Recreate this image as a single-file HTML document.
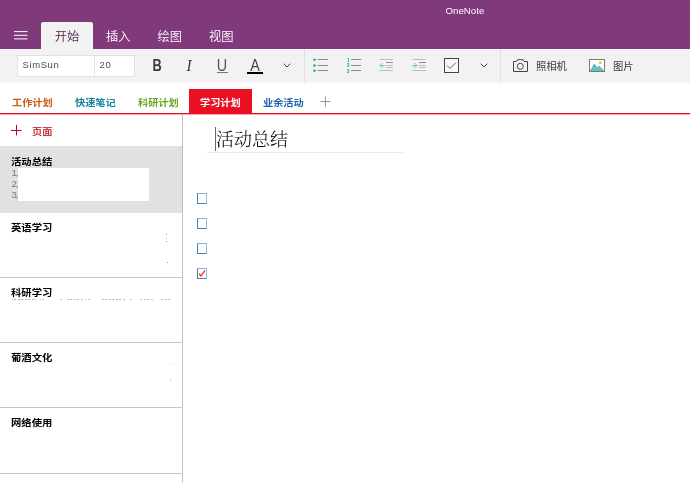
<!DOCTYPE html>
<html lang="zh-CN">
<head>
<meta charset="utf-8">
<title>OneNote</title>
<style>
*{box-sizing:border-box;margin:0;padding:0}
html,body{width:690px;height:482px;overflow:hidden;background:#fff}
body{position:relative;will-change:transform;font-family:"Liberation Sans","Noto Sans CJK SC",sans-serif;color:#222}
.abs{position:absolute;white-space:nowrap}
#titlebar{left:0;top:0;width:690px;height:49px;background:#80397b}
#appname{left:445.500px;top:4.700px;font-size:9.700px;line-height:11px;color:#fff}
.tab{top:29px;font-size:12.300px;line-height:16px;color:#fff;font-weight:350}
#tab-home{left:41px;top:22px;width:52px;height:27px;background:#f2f2f2;border-radius:2px 2px 0 0}
#ribbon{left:0;top:49px;width:690px;height:33px;background:#f2f2f2;border-bottom:1px solid #f7f7f7;height:34px}
.box{top:55px;height:22px;background:#fff;border:1px solid #e1e1e1;font-size:9.500px;letter-spacing:.6px;line-height:17.400px;color:#4a4a4a;padding-left:4.500px}
.sep{top:50px;width:1px;height:32px;background:#e0e0e0}
.rt{font-size:10.300px;line-height:14px;color:#3a3a3a;top:59.500px;font-weight:400}
.gl{top:57px;width:20px;text-align:center;font-size:16px;line-height:17px}
.sec{top:97px;font-size:10.200px;line-height:12px;font-weight:bold;transform:scaleY(.94);transform-origin:0 10px}
#redline{left:0;top:113px;width:690px;height:1px;background:#e81123}
#sideborder{left:182px;top:114px;width:1px;height:368px;background:#bdbdbd}
.item{left:0;width:182px;height:65px}
.item b{position:absolute;left:11px;top:8px;font-size:10.200px;line-height:14px;color:#000;transform:scale(1.015,.9);transform-origin:0 12px}
.hr{left:0;width:182px;height:1px;background:#c6c6c6}
.chk{left:197px;width:10px;height:11px;border:1px solid #4a7ebb;border-top-color:#8fb0d9;border-right-color:#9dbbe0;background:#fff}
.dot{width:1px;height:1px;background:#999}
</style>
</head>
<body>
<div id="titlebar" class="abs"></div>
<div id="appname" class="abs">OneNote</div>
<svg class="abs" style="left:14px;top:31px" width="14" height="10" viewBox="0 0 14 10"><path d="M0 .6H13.500M0 4.300H13.500M0 7.900H13.500" stroke="#fff" stroke-width="1" fill="none"/></svg>
<div id="tab-home" class="abs"></div>
<div class="abs tab" style="left:54.700px;color:#55264f">开始</div>
<div class="abs tab" style="left:106px">插入</div>
<div class="abs tab" style="left:157.500px">绘图</div>
<div class="abs tab" style="left:209px">视图</div>

<div id="ribbon" class="abs"></div>
<div class="abs box" style="left:17px;width:78px">SimSun</div>
<div class="abs box" style="left:94px;width:41px">20</div>
<div class="abs gl" style="left:146.500px;font-weight:bold;color:#3a3a3a;transform:scaleX(.8)">B</div>
<div class="abs gl" style="left:179px;font-size:17px;font-style:italic;color:#3a3a3a;font-family:'Liberation Serif',serif;transform:scaleX(.9)">I</div>
<div class="abs gl" style="left:212.300px;color:#555;transform:scaleX(.9)">U</div>
<div class="abs" style="left:217px;top:72px;width:11px;height:1px;background:#777"></div>
<div class="abs gl" style="left:244.800px;color:#444;transform:scaleX(.9)">A</div>
<div class="abs" style="left:247px;top:72px;width:16px;height:2px;background:#000"></div>
<svg class="abs" style="left:283px;top:63px" width="8" height="5" viewBox="0 0 8 5"><path d="M.7 .7L4 4L7.300 .7" stroke="#444" fill="none"/></svg>
<div class="abs sep" style="left:304px"></div>
<svg class="abs" style="left:313px;top:58px" width="16" height="15" viewBox="0 0 16 15"><path d="M4.500 1.500H15M4.500 7.500H15M4.500 12.500H15" stroke="#8a8a8a" fill="none"/><path d="M.4 1.700H2.600M.4 7.500H2.600M.4 12.800H2.600" stroke="#0e9c9c" stroke-width="2" fill="none"/></svg>
<svg class="abs" style="left:346px;top:58px" width="16" height="15" viewBox="0 0 16 15"><path d="M5.200 1.500H15M5.200 7.500H15M5.200 12.500H15" stroke="#8a8a8a" fill="none"/><text x="1" y="3.700" font-size="5.500" font-weight="bold" fill="#0e9c9c" textLength="2.400" lengthAdjust="spacingAndGlyphs" font-family="Liberation Sans,sans-serif">1</text><text x="1" y="9.400" font-size="5.500" font-weight="bold" fill="#0e9c9c" textLength="2.400" lengthAdjust="spacingAndGlyphs" font-family="Liberation Sans,sans-serif">2</text><text x="1" y="14.800" font-size="5.500" font-weight="bold" fill="#0e9c9c" textLength="2.400" lengthAdjust="spacingAndGlyphs" font-family="Liberation Sans,sans-serif">3</text></svg>
<svg class="abs" style="left:379px;top:58px" width="15" height="14" viewBox="0 0 15 14"><path d="M.5 1.500H14M7 7.500H14M7 9.500H14M.5 12.500H14" stroke="#bcbcbc" fill="none"/><path d="M7 4.500H14" stroke="#8c8c8c" fill="none"/><path d="M6 7.500H1M3.500 5L1 7.500L3.500 10" stroke="#6cc6c0" fill="none"/></svg>
<svg class="abs" style="left:411px;top:58px" width="15" height="14" viewBox="0 0 15 14"><path d="M1.500 1.500H15M8 7.500H15M8 9.500H15M1.500 12.500H15" stroke="#bcbcbc" fill="none"/><path d="M8 4.500H15" stroke="#8c8c8c" fill="none"/><path d="M1 7.500H6M3.500 5L6 7.500L3.500 10" stroke="#6cc6c0" fill="none"/></svg>
<svg class="abs" style="left:444px;top:58px" width="15" height="15" viewBox="0 0 15 15"><rect x=".5" y=".5" width="14" height="14" stroke="#444" fill="#f7f7f7"/><path d="M3 7.500L6 10.500L12 4.500" stroke="#666" fill="none"/></svg>
<svg class="abs" style="left:480px;top:63px" width="8" height="5" viewBox="0 0 8 5"><path d="M.7 .7L4 4L7.300 .7" stroke="#444" fill="none"/></svg>
<div class="abs sep" style="left:500px"></div>
<svg class="abs" style="left:512px;top:58px" width="17" height="15" viewBox="0 0 17 15"><path d="M1.500 3.500H4.500L5.500 1.700H11L12 3.500H15.500V13.500H1.500Z" stroke="#444" fill="none"/><circle cx="8.300" cy="8.300" r="3" stroke="#444" fill="none"/></svg>
<div class="abs rt" style="left:536px">照相机</div>
<svg class="abs" style="left:589px;top:59px" width="16" height="13" viewBox="0 0 16 13"><rect x=".5" y=".5" width="15" height="12" stroke="#777" fill="#fff"/><path d="M1.500 11.500L5.300 5L8.300 9L10.300 7L14.500 11.500Z" fill="#62c6c4" stroke="#2fa6a4" stroke-width=".6"/><circle cx="11.300" cy="3.700" r="1.200" fill="#f5a623"/></svg>
<div class="abs rt" style="left:613px">图片</div>

<div class="abs sec" style="left:12px;color:#cf5a12">工作计划</div>
<div class="abs sec" style="left:75px;color:#14809f">快速笔记</div>
<div class="abs sec" style="left:138px;color:#6aa61e">科研计划</div>
<div class="abs" style="left:189px;top:89px;width:63px;height:25px;background:#e81123"></div>
<div class="abs sec" style="left:200px;color:#fff">学习计划</div>
<div class="abs sec" style="left:263px;color:#1c62ad">业余活动</div>
<svg class="abs" style="left:320px;top:96px" width="11" height="11" viewBox="0 0 11 11"><path d="M5.500 .5V10.500M.5 5.500H10.500" stroke="#949494" fill="none"/></svg>
<div id="redline" class="abs"></div>
<div class="abs" style="left:0;top:114px;width:690px;height:1px;background:#f6a6ae"></div>

<svg class="abs" style="left:11px;top:125px" width="11" height="11" viewBox="0 0 11 11"><path d="M5.500 0V10.500M0 5.500H10.500" stroke="#c8001e" fill="none"/></svg>
<div class="abs" style="left:32px;top:124.500px;font-size:10.200px;line-height:13px;color:#c00012;font-weight:500;transform:scaleY(.93);transform-origin:0 10px">页面</div>
<div class="abs item" style="top:146px;height:67px;background:#e1e1e1"><b style="top:9px">活动总结</b>
<span class="abs" style="left:11.500px;top:21px;font-size:9.800px;letter-spacing:-1.200px;line-height:11px;color:#777">1,<br>2,<br>3,</span>
<span class="abs" style="left:17.500px;top:22px;width:131.500px;height:33px;background:#fff"></span></div>
<div class="abs item" style="top:212px"><b style="top:9px">英语学习</b></div>
<div class="abs item" style="top:277px"><b style="top:9px">科研学习</b></div>
<div class="abs" style="left:11px;top:299px;width:161px;height:1px;background:repeating-linear-gradient(90deg,transparent 0,transparent 2px,#fff 2px,#fff 3.500px),linear-gradient(90deg,transparent 0.6px,#b0b0b0 0.6px,#b0b0b0 24.8px,transparent 24.8px,transparent 29.0px,#c4c4c4 29.0px,#c4c4c4 34.5px,transparent 34.5px,transparent 48.0px,#d0d0d0 48.0px,#d0d0d0 51.0px,transparent 51.0px,transparent 56.5px,#c0c0c0 56.5px,#c0c0c0 71.6px,transparent 71.6px,transparent 74.4px,#c8c8c8 74.4px,#c8c8c8 80.0px,transparent 80.0px,transparent 89.5px,#b8b8b8 89.5px,#b8b8b8 114.3px,transparent 114.3px,transparent 118.5px,#d0d0d0 118.5px,#d0d0d0 121.0px,transparent 121.0px,transparent 128.0px,#c4c4c4 128.0px,#c4c4c4 142.0px,transparent 142.0px,transparent 150.0px,#c0c0c0 150.0px,#c0c0c0 160.0px,transparent 160.0px)"></div>
<div class="abs item" style="top:342px"><b style="top:9px">葡酒文化</b></div>
<div class="abs item" style="top:407px"><b style="top:9px">网络使用</b></div>
<div class="abs hr" style="top:277px"></div>
<div class="abs hr" style="top:342px"></div>
<div class="abs hr" style="top:407px"></div>
<div class="abs hr" style="top:473px"></div>
<div class="abs dot" style="left:166px;top:234px"></div>
<div class="abs dot" style="left:166px;top:238px;background:#ccc"></div>
<div class="abs dot" style="left:166px;top:241px"></div>
<div class="abs dot" style="left:167px;top:262px"></div>
<div class="abs dot" style="left:170px;top:364px;background:#ccc"></div>
<div class="abs dot" style="left:170px;top:379px;height:3px;background:#e0e0e0"></div>
<div id="sideborder" class="abs"></div>

<div class="abs" style="left:215px;top:127px;width:1px;height:24px;background:#6a6a6a"></div>
<div class="abs" style="left:216px;top:126.500px;font-family:'Liberation Serif','Noto Serif CJK SC',serif;font-weight:300;font-size:18px;line-height:26px;color:#000">活动总结</div>
<div class="abs" style="left:207px;top:152px;width:196px;height:1px;background:#ececec"></div>
<div class="abs chk" style="top:193px"></div>
<div class="abs chk" style="top:218px"></div>
<div class="abs chk" style="top:243px"></div>
<div class="abs chk" style="top:267.500px"><svg style="position:absolute;left:0;top:0" width="8" height="9" viewBox="0 0 8 9"><path d="M1 4.500L3 7L7 1.500" stroke="#e0502a" stroke-width="1.400" fill="none"/></svg></div>
</body>
</html>
